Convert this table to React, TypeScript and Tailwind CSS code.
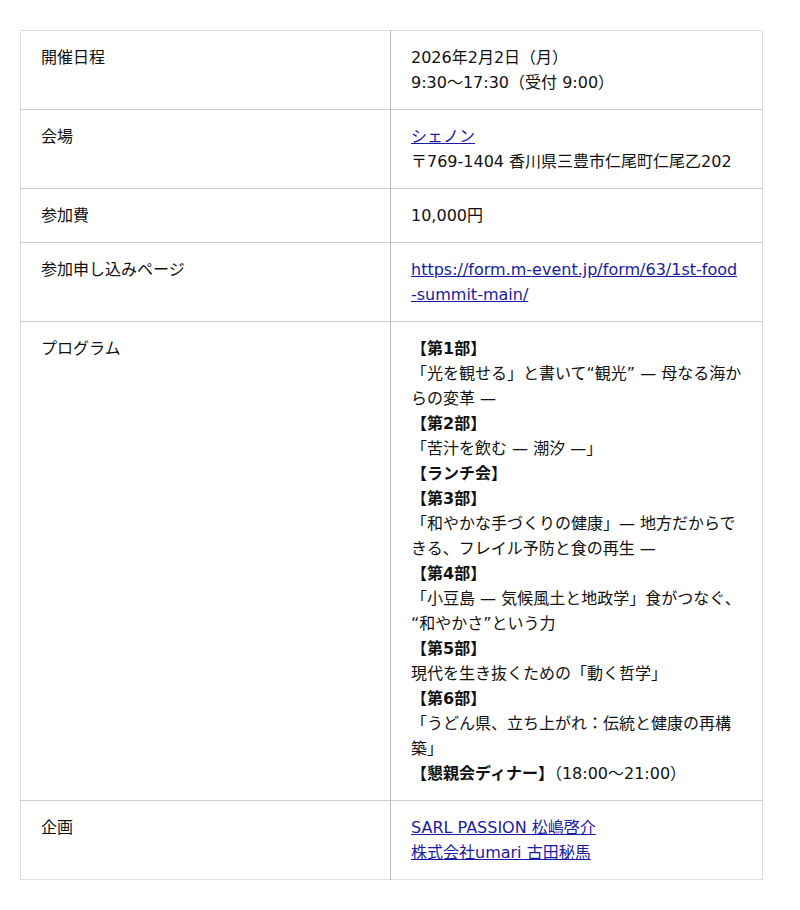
const rows: { label: string; value: React.ReactNode }[] = [
  {
    label: "開催日程",
    value: (
      <>
        2026年2月2日（月）
        <br />
        9:30〜17:30（受付 9:00）
      </>
    ),
  },
  {
    label: "会場",
    value: (
      <>
        <a href="#" className="text-[#1a1aa6] underline">
          シェノン
        </a>
        <br />
        〒769-1404 香川県三豊市仁尾町仁尾乙202
      </>
    ),
  },
  { label: "参加費", value: "10,000円" },
  {
    label: "参加申し込みページ",
    value: (
      <a href="#" className="text-[#1a1aa6] underline break-all">
        https://form.m-event.jp/form/63/1st-food-summit-main/
      </a>
    ),
  },
  {
    label: "プログラム",
    value: (
      <>
        <strong>【第1部】</strong>
        <br />
        「光を観せる」と書いて“観光” — 母なる海からの変革 —
        <br />
        <strong>【第2部】</strong>
        <br />
        「苦汁を飲む — 潮汐 —」
        <br />
        <strong>【ランチ会】</strong>
        <br />
        <strong>【第3部】</strong>
        <br />
        「和やかな手づくりの健康」— 地方だからできる、フレイル予防と食の再生 —
        <br />
        <strong>【第4部】</strong>
        <br />
        <span className="whitespace-nowrap">「小豆島 — 気候風土と地政学」食がつなぐ、</span>
        <wbr />
        “和やかさ”という力
        <br />
        <strong>【第5部】</strong>
        <br />
        現代を生き抜くための「動く哲学」
        <br />
        <strong>【第6部】</strong>
        <br />
        「うどん県、立ち上がれ：伝統と健康の再構築」
        <br />
        <strong>【懇親会ディナー】</strong>（18:00〜21:00）
      </>
    ),
  },
  {
    label: "企画",
    value: (
      <>
        <a href="#" className="text-[#1a1aa6] underline">
          SARL PASSION 松嶋啓介
        </a>
        <br />
        <a href="#" className="text-[#1a1aa6] underline">
          株式会社umari 古田秘馬
        </a>
      </>
    ),
  },
];

export default function App() {
  return (
    <div
      lang="ja"
      className="min-h-[910px] bg-white pt-[30px] pl-5 text-[16px] leading-[25px] text-[#111]"
      style={{ fontFamily: '"DejaVu Sans", "Noto Sans CJK JP", sans-serif' }}
    >
      <table className="w-[742px] table-fixed border-collapse border border-[#ddd]">
        <colgroup>
          <col className="w-[370px]" />
          <col className="w-[372px]" />
        </colgroup>
        <tbody>
          {rows.map((row) => (
            <tr key={row.label} className="border-b border-[#ccc] last:border-b-[#ddd]">
              <td className="border-r border-[#bbb] px-5 py-[14px] align-top">{row.label}</td>
              <td className="px-5 py-[14px] align-top">{row.value}</td>
            </tr>
          ))}
        </tbody>
      </table>
    </div>
  );
}
